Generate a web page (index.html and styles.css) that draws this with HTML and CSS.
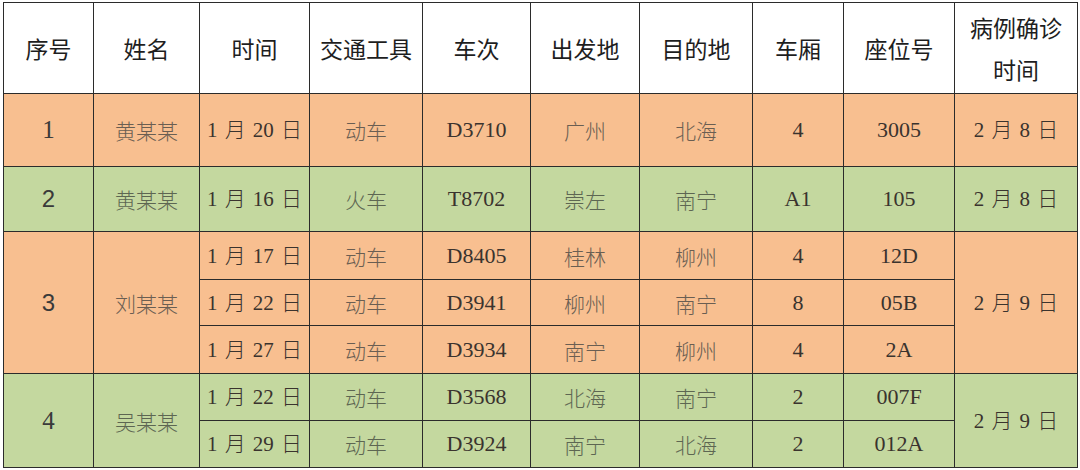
FILE: index.html
```html
<!DOCTYPE html>
<html lang="zh">
<head>
<meta charset="utf-8">
<link rel="stylesheet" href="styles.css">
</head>
<body>
<table class="t">
  <colgroup>
    <col class="c1"><col class="c2"><col class="c3"><col class="c4"><col class="c5">
    <col class="c6"><col class="c7"><col class="c8"><col class="c9"><col class="c10">
  </colgroup>
  <thead>
    <tr class="rh">
      <th>序号</th><th>姓名</th><th>时间</th><th>交通工具</th><th>车次</th>
      <th>出发地</th><th>目的地</th><th>车厢</th><th>座位号</th><th class="two">病例确诊<br>时间</th>
    </tr>
  </thead>
  <tbody>
    <tr class="org r1">
      <td class="idx serif">1</td><td class="zh">黄某某</td><td class="dt">1 月 20 日</td><td class="zh">动车</td><td class="code">D3710</td>
      <td class="zh">广州</td><td class="zh">北海</td><td class="code">4</td><td class="code">3005</td><td class="dt">2 月 8 日</td>
    </tr>
    <tr class="grn r2">
      <td class="idx sans">2</td><td class="zh">黄某某</td><td class="dt">1 月 16 日</td><td class="zh">火车</td><td class="code">T8702</td>
      <td class="zh">崇左</td><td class="zh">南宁</td><td class="code">A1</td><td class="code">105</td><td class="dt">2 月 8 日</td>
    </tr>
    <tr class="org r3a">
      <td class="idx sans" rowspan="3">3</td><td class="zh" rowspan="3">刘某某</td><td class="dt">1 月 17 日</td><td class="zh">动车</td><td class="code">D8405</td>
      <td class="zh">桂林</td><td class="zh">柳州</td><td class="code">4</td><td class="code">12D</td><td class="dt" rowspan="3">2 月 9 日</td>
    </tr>
    <tr class="org r3b">
      <td class="dt">1 月 22 日</td><td class="zh">动车</td><td class="code">D3941</td>
      <td class="zh">柳州</td><td class="zh">南宁</td><td class="code">8</td><td class="code">05B</td>
    </tr>
    <tr class="org r3c">
      <td class="dt">1 月 27 日</td><td class="zh">动车</td><td class="code">D3934</td>
      <td class="zh">南宁</td><td class="zh">柳州</td><td class="code">4</td><td class="code">2A</td>
    </tr>
    <tr class="grn r4a">
      <td class="idx serif" rowspan="2">4</td><td class="zh" rowspan="2">吴某某</td><td class="dt">1 月 22 日</td><td class="zh">动车</td><td class="code">D3568</td>
      <td class="zh">北海</td><td class="zh">南宁</td><td class="code">2</td><td class="code">007F</td><td class="dt" rowspan="2">2 月 9 日</td>
    </tr>
    <tr class="grn r4b">
      <td class="dt">1 月 29 日</td><td class="zh">动车</td><td class="code">D3924</td>
      <td class="zh">南宁</td><td class="zh">北海</td><td class="code">2</td><td class="code">012A</td>
    </tr>
  </tbody>
</table>
</body>
</html>
```
FILE: styles.css
```css
html, body {
  margin: 0;
  padding: 0;
  background: #ffffff;
}
body {
  padding: 2px 0 0 3px;
}
.t {
  border-collapse: collapse;
  table-layout: fixed;
  width: 1074px;
}
.c1 { width: 90px; }
.c2 { width: 106px; }
.c3 { width: 110px; }
.c4 { width: 113px; }
.c5 { width: 108px; }
.c6 { width: 109px; }
.c7 { width: 113px; }
.c8 { width: 91px; }
.c9 { width: 111px; }
.c10 { width: 123px; }
th, td {
  border: 1.5px solid #2b2b2b;
  padding: 0;
  text-align: center;
  vertical-align: middle;
  white-space: nowrap;
  overflow: hidden;
}
th {
  font-family: "Noto Sans CJK SC", sans-serif;
  font-weight: 400;
  font-size: 23px;
  color: #1e1e1e;
  background: #ffffff;
  line-height: 42px;
}
.rh { height: 91px; }
.r1 { height: 73px; }
.r2 { height: 65px; }
.r3a { height: 48px; }
.r3b { height: 46px; }
.r3c { height: 48px; }
.r4a { height: 47px; }
.r4b { height: 47px; }
.org td { background: #f8bf90; }
.grn td { background: #c4d89f; }
td {
  font-size: 21px;
  line-height: 24px;
}
.zh {
  font-family: "Noto Sans CJK SC", sans-serif;
  font-weight: 300;
  color: #6a5e52;
}
.grn .zh { color: #5d6652; }
.dt {
  font-family: "Liberation Serif", "Noto Sans CJK SC", serif;
  font-weight: 300;
  word-spacing: 2px;
  color: #3a332e;
}
.code {
  font-family: "Liberation Serif", serif;
  font-size: 22px;
  color: #3a332e;
}
.idx {
  font-size: 25px;
  color: #3a3a3a;
}
.idx.serif { font-family: "Liberation Serif", serif; }
.idx.sans { font-family: "Liberation Sans", sans-serif; font-size: 24px; }
```
